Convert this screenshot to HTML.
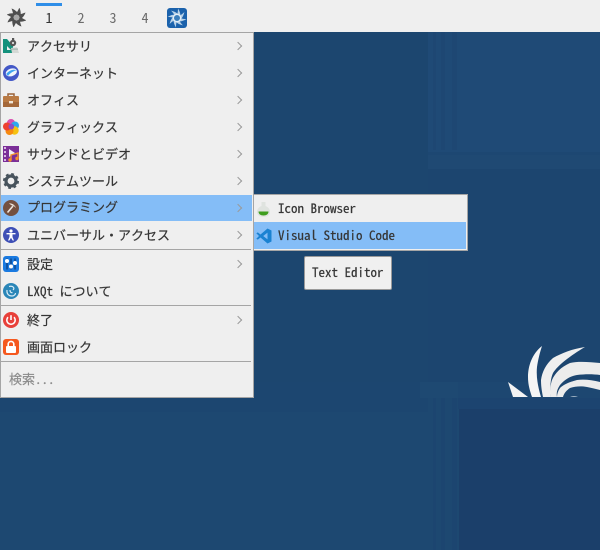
<!DOCTYPE html>
<html><head><meta charset="utf-8">
<style>
html,body{margin:0;padding:0}
body{width:600px;height:550px;overflow:hidden;position:relative;background:#1d4871;font-family:"Noto Sans Mono CJK JP","Noto Sans CJK JP","DejaVu Sans Mono",monospace;font-size:13px;color:#363636}
.a{position:absolute}
.t{position:absolute;left:27px;line-height:18px;height:18px;white-space:pre;-webkit-text-stroke:.2px currentColor}
.r{position:absolute;left:235px;width:5px;height:5px;border-top:1px solid #9a9a9a;border-right:1px solid #9a9a9a;transform:rotate(45deg)}
.n{position:absolute;top:9px;line-height:18px;width:14px;text-align:center;color:#6c6c6c;font-size:14px}
.s{position:absolute;left:1px;width:250px;height:1px;background:#a5a5a5}
svg{position:absolute}
</style></head><body>
<!-- wallpaper -->
<div class="a" style="left:0;top:32px;width:428px;height:350px;background:#1c466f"></div>
<div class="a" style="left:0;top:382px;width:428px;height:30px;background:#1c4670"></div>
<div class="a" style="left:428px;top:32px;width:172px;height:120px;background:#1f4a76"></div>
<div class="a" style="left:428px;top:152px;width:172px;height:3px;background:#1d4772"></div>
<div class="a" style="left:428px;top:155px;width:172px;height:14px;background:#1f4973"></div>
<div class="a" style="left:428px;top:169px;width:172px;height:213px;background:#1c456f"></div>
<div class="a" style="left:420px;top:382px;width:38px;height:16px;background:#1e4972"></div>
<div class="a" style="left:458px;top:382px;width:142px;height:16px;background:#1d4771"></div>
<div class="a" style="left:458px;top:398px;width:142px;height:11px;background:#1c4470"></div>
<div class="a" style="left:459px;top:409px;width:141px;height:141px;background:#1b3f6a"></div>
<div class="a" style="left:433px;top:32px;width:3px;height:118px;background:#1e4773"></div>
<div class="a" style="left:441px;top:32px;width:4px;height:118px;background:#1e4773"></div>
<div class="a" style="left:452px;top:32px;width:5px;height:118px;background:#1e4773"></div>
<div class="a" style="left:433px;top:398px;width:3px;height:152px;background:#1c4570"></div>
<div class="a" style="left:441px;top:398px;width:4px;height:152px;background:#1c4570"></div>
<div class="a" style="left:452px;top:398px;width:5px;height:152px;background:#1c4570"></div>
<svg style="left:500px;top:340px" width="100" height="60" viewBox="500 340 100 60">
<path d="M508 382 L528 397 L513 397Z" fill="#f3f3f3"/>
<path d="M542 346 C532 354 528 366 528 377 C528 385 530 391 532 397 L541 397 C538 387 536 377 537 367 C538 360 540 352 542 346Z" fill="#f5f5f5"/>
<path d="M585 347 C572 349 562 353 553 358 C546 364 542 372 541 380 C541 387 542 392 543 397 L551 397 C550 388 550 380 553 373 C558 365 570 356 585 347Z" fill="#efefef"/>
<path d="M600 363 C590 362 578 361 570 363 C561 367 555 373 552 380 C550 386 550 392 551 397 L557 397 C556 392 558 388 560 385 C565 379 571 376 577 375 C585 374 593 374 600 375Z" fill="#ececec"/>
<path d="M600 382 C592 380 584 379 577 380 C569 382 563 385 560 388 C558 391 557 394 557 397 L563 397 C564 393 567 390 570 388 C576 386 582 386 587 387 C592 388 596 389 600 390Z" fill="#ececec"/>
<path d="M570 397 Q574 395 578 397Z" fill="#9fb2c4"/>
</svg>

<div class="a" style="left:0;top:0;width:600px;height:32px;background:#efefef"></div>
<div class="a" style="left:36px;top:3px;width:26px;height:3px;background:#2f8ee8"></div>
<svg style="left:7px;top:8px" width="19" height="19" viewBox="0 0 19 19">
<g fill="#4f4f4f"><path id="b" d="M11.5 6 C10 3.5 7.5 1.5 4.5 0.5 C5.5 3 6 5 6.5 7.5Z"/>
<use href="#b" transform="rotate(45 9.5 9.5)"/><use href="#b" transform="rotate(90 9.5 9.5)"/><use href="#b" transform="rotate(135 9.5 9.5)"/><use href="#b" transform="rotate(180 9.5 9.5)"/><use href="#b" transform="rotate(225 9.5 9.5)"/><use href="#b" transform="rotate(270 9.5 9.5)"/><use href="#b" transform="rotate(315 9.5 9.5)"/></g>
<circle cx="9.5" cy="9.5" r="2.8" fill="#a8a8a8"/>
</svg>
<div class="n" style="left:42px;color:#333">1</div>
<div class="n" style="left:74px">2</div>
<div class="n" style="left:106px">3</div>
<div class="n" style="left:138px">4</div>
<svg style="left:167px;top:8px" width="20" height="20" viewBox="0 0 20 20">
<rect width="20" height="20" rx="3" fill="#1b62ac"/>
<g fill="#b8d2e8"><path id="c" d="M11 6 C9.5 4.6 7 3.2 4 2.6 C5.6 4.2 6.8 5.6 7.8 7.6Z"/>
<use href="#c" transform="rotate(45 10 10)"/><use href="#c" transform="rotate(90 10 10)"/><use href="#c" transform="rotate(135 10 10)"/><use href="#c" transform="rotate(180 10 10)"/><use href="#c" transform="rotate(225 10 10)"/><use href="#c" transform="rotate(270 10 10)"/><use href="#c" transform="rotate(315 10 10)"/></g>
<circle cx="10" cy="10" r="3.6" fill="#3c7fbc" stroke="#e4eef6" stroke-width="1.2"/>
</svg>

<!-- main menu -->
<div class="a" style="left:0;top:32px;width:252px;height:364px;background:#efefef;border:1px solid #a5a5a5"></div>
<div class="a" style="left:1px;top:195px;width:251px;height:26px;background:#84bdf7"></div>

<svg style="left:3px;top:38px" width="16" height="16" viewBox="0 0 16 16">
<path d="M0 1 L4 1 L10 8 L10 15 L0 15Z" fill="#14917c"/>
<path d="M4 8 L4 12 L8 12Z" fill="#efefef"/>
<path d="M8 10 L14 9 L16 15 L9 15Z" fill="#d4d9d5"/>
<rect x="8" y="10.5" width="7" height="1.2" fill="#9fb4ae"/>
<circle cx="10" cy="5" r="3.2" fill="#555"/><rect x="9" y="0" width="2.2" height="3" fill="#555"/><circle cx="10" cy="5" r="1.1" fill="#ddd"/>
</svg>
<svg style="left:3px;top:65px" width="16" height="16" viewBox="0 0 16 16">
<circle cx="8" cy="8" r="8" fill="#4358c7"/>
<ellipse cx="8.5" cy="7.5" rx="5.8" ry="3.8" transform="rotate(-18 8 8)" fill="#f1f5fb"/>
<path d="M3.2 9 C6 5.2 10 4.2 13.8 5 C11 5.8 7 8 5 11Z" fill="#3fa4f0"/>
</svg>
<svg style="left:3px;top:92px" width="16" height="16" viewBox="0 0 16 16">
<path d="M5 4 V2 H11 V4" fill="none" stroke="#9a6238" stroke-width="1.5"/>
<rect y="4" width="16" height="11" rx="1" fill="#b97a44"/><rect y="10" width="16" height="5" fill="#a4683a"/>
<rect x="6" y="9" width="4" height="2.4" fill="#f0e6d8"/>
</svg>
<svg style="left:3px;top:119px" width="16" height="16" viewBox="0 0 16 16">
<circle cx="8" cy="4.2" r="4.2" fill="#d94fb0"/><circle cx="12" cy="6.5" r="4" fill="#2ea8ee"/><circle cx="11.5" cy="11.5" r="4.2" fill="#f6c210"/><circle cx="6.5" cy="12" r="4" fill="#f68a10"/><circle cx="4" cy="7.5" r="4" fill="#ee3f30"/><circle cx="8.3" cy="7.6" r="2.8" fill="#8a4cc8"/>
</svg>
<svg style="left:3px;top:146px" width="16" height="16" viewBox="0 0 16 16">
<rect width="16" height="16" fill="#7b2f98"/>
<path d="M1 1h2v2H1zM1 5h2v2H1zM1 9h2v2H1zM1 13h2v2H1z" fill="#d9b7e4"/>
<path d="M6 3 L12 7 L6 11Z" fill="#f2f0f4"/>
<path d="M8 14 V9 L15 7 V12" fill="none" stroke="#f3922b" stroke-width="1.4"/><circle cx="7" cy="14" r="1.7" fill="#f3922b"/><circle cx="14" cy="12.5" r="1.7" fill="#f3922b"/>
</svg>
<svg style="left:3px;top:173px" width="16" height="16" viewBox="0 0 16 16">
<circle cx="8" cy="8" r="5" fill="none" stroke="#47535c" stroke-width="3.2"/>
<circle cx="8" cy="8" r="6.8" fill="none" stroke="#47535c" stroke-width="2.4" stroke-dasharray="2.7 2.64"/>
</svg>
<svg style="left:3px;top:200px" width="16" height="16" viewBox="0 0 16 16">
<circle cx="8" cy="8" r="8" fill="#74503f"/>
<path d="M4.5 12.5 L10 6" stroke="#ece4dc" stroke-width="1.6"/><path d="M6 3.5 C9 3 12 5 13 8 L10.8 6 L8.5 5.2Z" fill="#ece4dc"/>
</svg>
<svg style="left:3px;top:227px" width="16" height="16" viewBox="0 0 16 16">
<circle cx="8" cy="8" r="8" fill="#3e4fb6"/>
<circle cx="8" cy="4" r="1.6" fill="#fff"/><path d="M3.5 6 H12.5 V7.4 H9.5 V10 L11 13.5 H9.6 L8 10.8 L6.4 13.5 H5 L6.5 10 V7.4 H3.5Z" fill="#fff"/>
</svg>
<svg style="left:3px;top:256px" width="16" height="16" viewBox="0 0 16 16">
<rect width="16" height="16" rx="3" fill="#1a7ae0"/>
<path d="M4 2.5v11M8 2.5v11M12 2.5v11" stroke="#0c3f80" stroke-width="1.3"/>
<circle cx="4" cy="5" r="2" fill="#fff"/><circle cx="8" cy="10.5" r="2" fill="#fff"/><circle cx="12" cy="7" r="2" fill="#fff"/>
</svg>
<svg style="left:3px;top:283px" width="16" height="16" viewBox="0 0 16 16">
<circle cx="8" cy="8" r="8" fill="#2a86b8"/>
<path d="M6 3.5 C10 2.5 12 5 10 7 M4 7 C3.5 10 5 13 9 13 C11 13 12.5 11.5 12.5 10 M7 7 C7 9 8 10 9.5 9.5" fill="none" stroke="#d8ecf6" stroke-width="1.2"/>
</svg>
<svg style="left:3px;top:312px" width="16" height="16" viewBox="0 0 16 16">
<circle cx="8" cy="8" r="8" fill="#e8403a"/>
<path d="M5 5.2 A4.2 4.2 0 1 0 11 5.2" fill="none" stroke="#fff" stroke-width="1.6"/><path d="M8 3.2 V8" stroke="#fff" stroke-width="1.6"/>
</svg>
<svg style="left:3px;top:339px" width="16" height="16" viewBox="0 0 16 16">
<rect width="16" height="16" rx="3" fill="#f5581e"/>
<rect x="3" y="7" width="10" height="7" rx="1" fill="#fff"/><path d="M5.2 7.5 V5.2 A2.8 2.8 0 0 1 10.8 5.2 V7.5" fill="none" stroke="#fff" stroke-width="1.6"/>
</svg>

<div class="t" style="top:37px">アクセサリ</div><div class="r" style="top:43px"></div>
<div class="t" style="top:64px">インターネット</div><div class="r" style="top:70px"></div>
<div class="t" style="top:91px">オフィス</div><div class="r" style="top:97px"></div>
<div class="t" style="top:118px">グラフィックス</div><div class="r" style="top:124px"></div>
<div class="t" style="top:145px">サウンドとビデオ</div><div class="r" style="top:151px"></div>
<div class="t" style="top:172px">システムツール</div><div class="r" style="top:178px"></div>
<div class="t" style="top:198px">プログラミング</div><div class="r" style="top:205px"></div>
<div class="t" style="top:226px">ユニバーサル・アクセス</div><div class="r" style="top:232px"></div>
<div class="s" style="top:249px"></div>
<div class="t" style="top:255px">設定</div><div class="r" style="top:261px"></div>
<div class="t" style="top:282px">LXQt について</div>
<div class="s" style="top:305px"></div>
<div class="t" style="top:311px">終了</div><div class="r" style="top:317px"></div>
<div class="t" style="top:338px">画面ロック</div>
<div class="s" style="top:361px"></div>
<div class="t" style="top:370px;left:9px;color:#8c8c8c">検索...</div>

<!-- submenu -->
<div class="a" style="left:253px;top:194px;width:213px;height:55px;background:#efefef;border:1px solid #a5a5a5"></div>
<div class="a" style="left:254px;top:222px;width:212px;height:27px;background:#84bdf7"></div>
<svg style="left:256px;top:201px" width="15" height="16" viewBox="0 0 15 16">
<path d="M5.5 1 H9.5 V5 C12 6 14 8 14 11 C14 14 11 16 7.5 16 C4 16 1 14 1 11 C1 8 3 6 5.5 5Z" fill="#dfe3df"/>
<path d="M2.5 10.5 H12.5 C12.5 13 10.5 14.5 7.5 14.5 C4.5 14.5 2.5 13 2.5 10.5Z" fill="#3f9e1f"/>
</svg>
<svg style="left:256px;top:228px" width="16" height="16" viewBox="0 0 16 16">
<path d="M11.5 0.5 L15.5 2.5 V13.5 L11.5 15.5 L4.5 9.5 L1.8 11.6 L0.3 10.8 L3 8 L0.3 5.2 L1.8 4.4 L4.5 6.5Z M11.5 4.6 L7.2 8 L11.5 11.4Z" fill="#1a82d2" fill-rule="evenodd"/>
</svg>
<div class="t" style="left:278px;top:199px">Icon Browser</div>
<div class="t" style="left:278px;top:226px">Visual Studio Code</div>

<!-- tooltip -->
<div class="a" style="left:304px;top:256px;width:86px;height:32px;background:#f0f0f0;border:1px solid #9a9a9a;border-radius:2px"></div>
<div class="t" style="left:312px;top:263px">Text Editor</div>
</body></html>
